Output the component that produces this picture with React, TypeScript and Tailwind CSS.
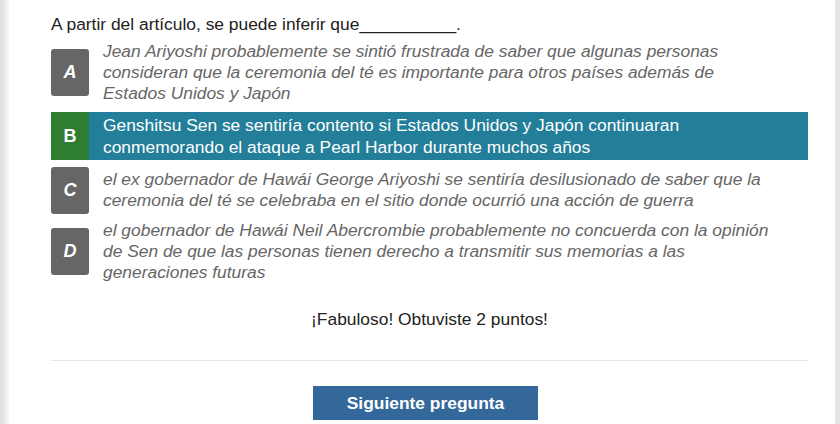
import React from "react";

const opts = [
  { l: "A", t: "Jean Ariyoshi probablemente se sintió frustrada de saber que algunas personas consideran que la ceremonia del té es importante para otros países además de Estados Unidos y Japón", mt: "mt-[6px]" },
  { l: "B", t: "Genshitsu Sen se sentiría contento si Estados Unidos y Japón continuaran conmemorando el ataque a Pearl Harbor durante muchos años", mt: "mt-[8px]", sel: true },
  { l: "C", t: "el ex gobernador de Hawái George Ariyoshi se sentiría desilusionado de saber que la ceremonia del té se celebraba en el sitio donde ocurrió una acción de guerra", mt: "mt-[6px]" },
  { l: "D", t: "el gobernador de Hawái Neil Abercrombie probablemente no concuerda con la opinión de Sen de que las personas tienen derecho a transmitir sus memorias a las generaciones futuras", mt: "mt-[6px]" },
];

export default function App() {
  return (
    <div className="flex h-[424px] w-[840px] overflow-hidden bg-white" style={{ fontFamily: '"Liberation Sans", Arial, sans-serif' }}>
      <div className="w-[9px] shrink-0 bg-gradient-to-r from-[#dedede] via-[#e8e8e8] to-[#f8f8f8]" />
      <div className="flex-1 pl-[42px] pr-[27px] pt-[14px]">
        <div className="text-[17.4px] leading-[21px] text-[#222]">A partir del artículo, se puede inferir que__________.</div>
        {opts.map((o) =>
          o.sel ? (
            <div key={o.l} className={`${o.mt} flex h-[48px] items-center bg-[#237e99]`}>
              <div className="flex h-[48px] w-[38px] shrink-0 items-center justify-center bg-[#2e7d32] text-[18px] font-bold text-white">{o.l}</div>
              <div className="pl-[14px] pr-[32px] text-[17.4px] leading-[22px] text-white">{o.t}</div>
            </div>
          ) : (
            <div key={o.l} className={`${o.mt} flex min-h-[48px] items-center`}>
              <div className="flex h-[47px] w-[38px] shrink-0 items-center justify-center rounded-[3px] bg-[#666666] text-[18px] font-bold italic text-white">{o.l}</div>
              <div className="pl-[14px] pr-[32px] text-[17.4px] italic leading-[21px] text-[#666]">{o.t}</div>
            </div>
          )
        )}
        <div className="mt-[26px] text-center text-[17.4px] leading-[21px] text-[#222]">¡Fabuloso! Obtuviste 2 puntos!</div>
        <div className="mt-[30px] h-px bg-[#e5e5e5]" />
        <div className="mt-[25px] flex justify-center pr-[8px]">
          <div className="flex h-[34px] w-[225px] items-center justify-center bg-[#34679a] text-[17.4px] font-bold text-white">Siguiente pregunta</div>
        </div>
      </div>
      <div className="w-[5px] shrink-0 bg-[#e6e6e6]" />
    </div>
  );
}
